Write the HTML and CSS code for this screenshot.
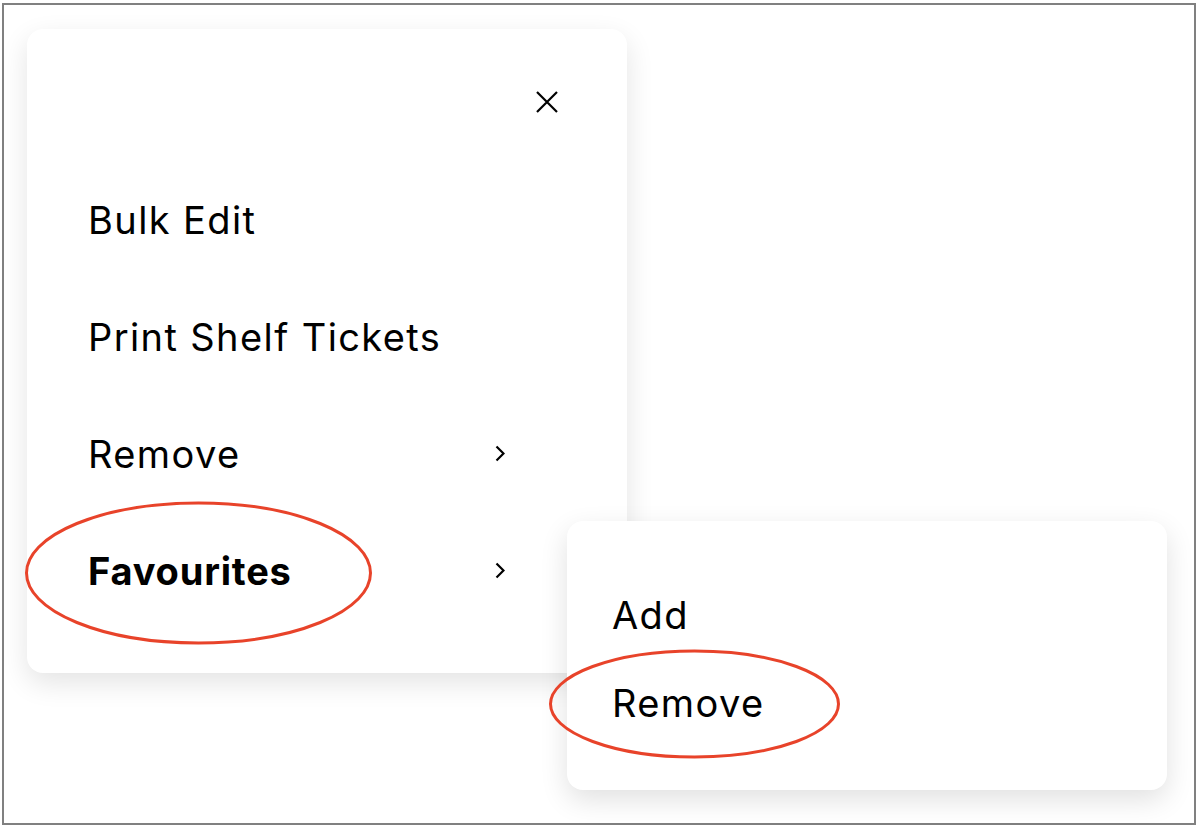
FILE: index.html
```html
<!DOCTYPE html>
<html>
<head>
<meta charset="utf-8">
<link rel="stylesheet" href="styles.css">
</head>
<body>
<div class="frame">
  <div class="menu">
    <div class="menu-head">
      <button class="close" aria-label="Close">
        <svg width="22" height="22" viewBox="0 0 22 22"><path d="M1 1L21 21M21 1L1 21" stroke="#000" stroke-width="2.2" fill="none"/></svg>
      </button>
    </div>
    <div class="item"><span>Bulk Edit</span></div>
    <div class="item"><span>Print Shelf Tickets</span></div>
    <div class="item"><span>Remove</span><svg class="chev" width="10" height="17" viewBox="0 0 10 17"><path d="M1.5 1.5L8.5 8.5L1.5 15.5" stroke="#000" stroke-width="2.2" fill="none"/></svg></div>
    <div class="item bold"><span>Favourites</span><svg class="chev" width="10" height="17" viewBox="0 0 10 17"><path d="M1.5 1.5L8.5 8.5L1.5 15.5" stroke="#000" stroke-width="2.2" fill="none"/></svg></div>
  </div>
  <div class="submenu">
    <div class="sub-item">Add</div>
    <div class="sub-item">Remove</div>
  </div>
  <svg class="marks" width="1198" height="828" viewBox="0 0 1198 828">
    <ellipse cx="198.5" cy="573" rx="172" ry="70" fill="none" stroke="#e8432a" stroke-width="3"/>
    <ellipse cx="694.5" cy="704" rx="144" ry="53" fill="none" stroke="#e8432a" stroke-width="3"/>
  </svg>
</div>
</body>
</html>
```
FILE: styles.css
```css
* { box-sizing: border-box; }
html, body { margin: 0; padding: 0; background: #fff; }
body {
  font-family: Inter, "Open Sans", sans-serif;
  color: #000;
  width: 1198px;
  height: 828px;
  overflow: hidden;
}
.frame {
  position: relative;
  margin: 3px 0 0 2px;
  width: 1194px;
  height: 822px;
  border: 2px solid #808080;
  background: #fff;
}
.menu {
  margin: 24px 0 0 23px;
  width: 600px;
  height: 644px;
  background: #fff;
  border-radius: 16px;
  box-shadow: 0 10px 28px rgba(0,0,0,0.11);
  display: flex;
  flex-direction: column;
}
.menu-head {
  height: 132px;
  display: flex;
  justify-content: flex-end;
  align-items: flex-start;
  padding: 62px 69px 0 0;
}
.close {
  border: 0;
  background: none;
  padding: 0;
  width: 22px;
  height: 22px;
  display: block;
}
.close svg { display: block; }
.item {
  height: 117px;
  display: flex;
  align-items: center;
  justify-content: space-between;
  padding: 0 122px 0 61px;
  font-size: 38px;
  font-weight: 400;
  letter-spacing: 1.4px;
}
.item.bold { font-weight: 700; letter-spacing: 0.8px; }
.chev { display: block; }
.submenu {
  position: absolute;
  left: 563px;
  top: 516px;
  width: 600px;
  height: 269px;
  background: #fff;
  border-radius: 16px;
  box-shadow: 0 10px 28px rgba(0,0,0,0.12);
  padding: 50px 0 0 45px;
}
.sub-item {
  height: 88px;
  display: flex;
  align-items: center;
  font-size: 38px;
  letter-spacing: 1.4px;
}
.marks {
  position: absolute;
  left: -4px;
  top: -5px;
  pointer-events: none;
}
```
